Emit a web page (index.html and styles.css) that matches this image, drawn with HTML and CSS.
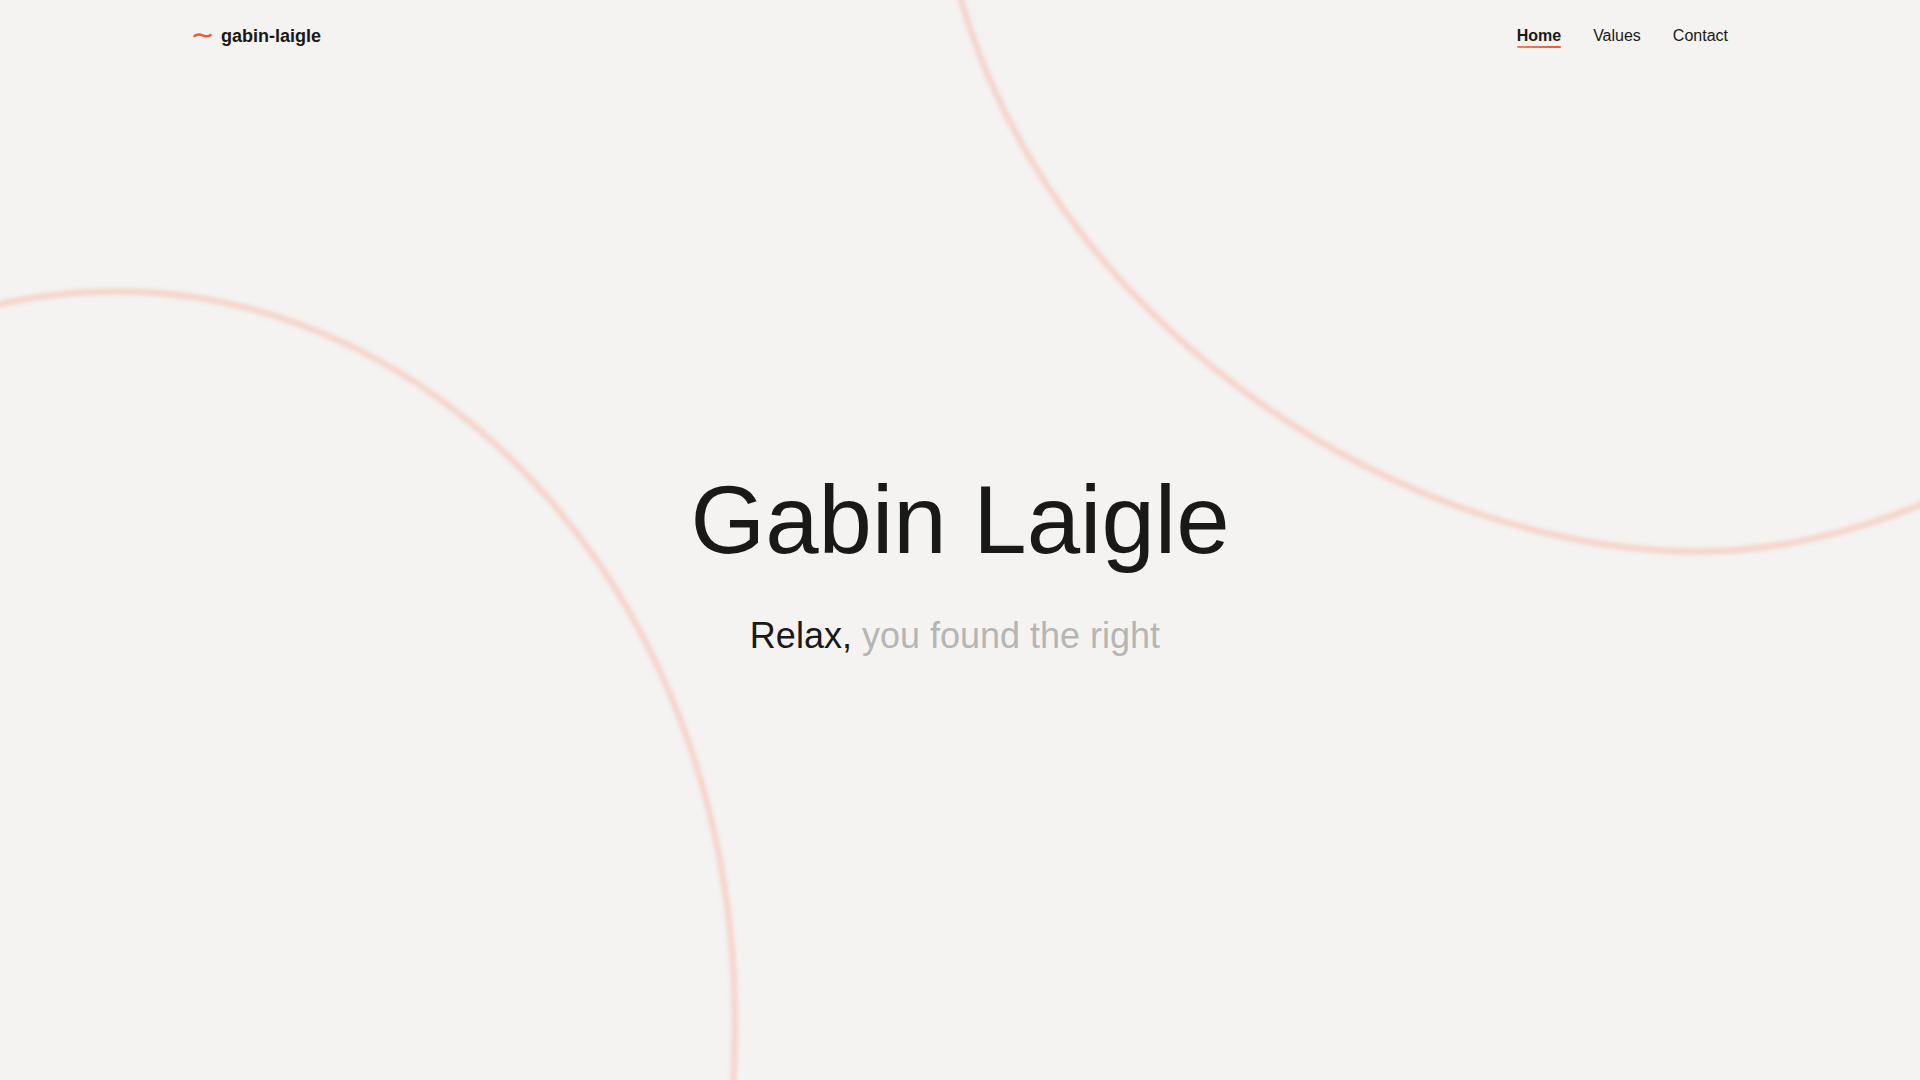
FILE: index.html
```
<!DOCTYPE html>
<html lang="en">
<head>
<meta charset="UTF-8">
<meta name="viewport" content="width=device-width, initial-scale=1.0">
<title>Gabin Laigle</title>
<link rel="stylesheet" href="styles.css">
</head>
<body>

<!-- Background curves -->
<svg class="background" viewBox="0 0 1920 1080" preserveAspectRatio="none" aria-hidden="true">
    <path d="M-20 309 C25 297 70 291.500 117 291.500 C440 291.500 735 595 735 1025 Q735 1060 732 1100"/>
    <path d="M955 -22 L961 0 C1057 330 1403 551.500 1700 551.500 Q1812 551.500 1940 497"/>
</svg>

<header class="header">
    <a class="logo" href="#home">
        <svg class="logo-icon" viewBox="0 0 20 20" aria-hidden="true">
            <path d="M1.700 10.800 C4 8 7.500 8.200 10.500 9.300 C14 10.600 17 11.200 19.300 8.200"/>
        </svg>
        <span>gabin-laigle</span>
    </a>
    <nav class="nav">
        <a class="active" href="#home">Home</a>
        <a href="#values">Values</a>
        <a href="#contact">Contact</a>
    </nav>
</header>

<main class="hero" id="home">
    <h1>Gabin Laigle</h1>
    <p class="tagline"><strong>Relax,</strong> you found the right </p>
</main>

</body>
</html>
```

FILE: styles.css
```
* {
    box-sizing: border-box;
}
body {
    display: flex;
    flex-direction: column;
    min-height: 100vh;
    margin: 0;
    background-color: #f4f3f1;
    color: #191918;
    font-family: "Liberation Sans", Arial, sans-serif;
    overflow: hidden;
}
a {
    color: inherit;
    text-decoration: none;
}
/* Curves lie behind the whole page */
.background {
    position: absolute;
    top: 0;
    left: 0;
    width: 100%;
    height: 100%;
    z-index: -1;
}
.background path {
    fill: none;
    stroke: #f6d2c7;
    stroke-width: 6;
    filter: blur(2px);
}
.header {
    display: flex;
    align-items: center;
    justify-content: space-between;
    height: 72px;
    padding: 0 10%;
}
.logo {
    display: flex;
    align-items: center;
    gap: 9px;
    font-size: 18px;
    font-weight: bold;
}
.logo-icon {
    width: 20px;
    height: 20px;
    fill: none;
    stroke: #f5562a;
    stroke-width: 2.500;
}
.nav {
    display: flex;
    gap: 32px;
    font-size: 16px;
}
.nav a {
    position: relative;
}
.nav .active {
    font-weight: bold;
}
/* Underline of the current page */
.nav .active::after {
    content: "";
    position: absolute;
    left: 0;
    bottom: -3px;
    width: 100%;
    height: 2px;
    border-radius: 1px;
    background: linear-gradient(90deg, #fa7b58, #f5562a);
}
.hero {
    flex: 1;
    display: flex;
    flex-direction: column;
    align-items: center;
    justify-content: center;
    gap: 36px;
    padding-bottom: 22px;
}
h1 {
    margin: 0;
    font-size: 96px;
    font-weight: normal;
    line-height: 106px;
}
.tagline {
    margin: 0;
    color: #b5b5b3;
    font-size: 36px;
    line-height: 54px;
    white-space: pre;
}
.tagline strong {
    color: #191918;
    font-weight: normal;
}
```
